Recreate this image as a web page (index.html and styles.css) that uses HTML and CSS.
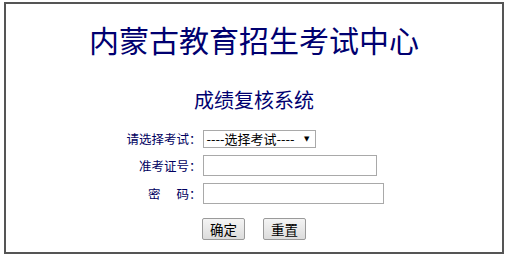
FILE: index.html
```html
<!DOCTYPE html>
<html lang="zh-CN">
<head>
<meta charset="utf-8">
<title>内蒙古教育招生考试中心 - 成绩复核系统</title>
<link rel="stylesheet" href="styles.css">
</head>
<body>
<div class="frame">
  <h1 class="title">内蒙古教育招生考试中心</h1>
  <h2 class="subtitle">成绩复核系统</h2>
  <form class="form">
    <label class="label">请选择考试：</label>
    <div class="field">
      <div class="select" role="listbox">
        <span class="select-text">----选择考试----</span>
        <span class="arrow">▼</span>
      </div>
    </div>
    <label class="label">准考证号：</label>
    <div class="field"><input class="input input-a" type="text"></div>
    <label class="label"><span class="spaced">密</span>码：</label>
    <div class="field"><input class="input input-b" type="password"></div>
  </form>
  <div class="buttons">
    <button class="btn" type="button">确定</button>
    <button class="btn" type="button">重置</button>
  </div>
</div>
</body>
</html>
```

FILE: styles.css
```css
html, body {
  margin: 0;
  padding: 0;
  background: #ffffff;
}
body {
  font-family: "Noto Sans CJK SC", "Noto Sans", sans-serif;
  color: #000080;
}
.frame {
  box-sizing: border-box;
  width: 500px;
  height: 252px;
  margin: 2px 0 0 4px;
  border: 2px solid #555555;
  padding-top: 20px;
}
.title {
  margin: 0;
  font-size: 30px;
  line-height: 30px;
  font-weight: normal;
  text-align: center;
  color: #000070;
}
.subtitle {
  margin: 36px 0 0;
  font-size: 20px;
  line-height: 20px;
  font-weight: normal;
  text-align: center;
  color: #000070;
}
.form {
  display: grid;
  grid-template-columns: 78px 181px;
  row-gap: 7px;
  justify-content: center;
  align-items: center;
  margin-top: 20px;
}
.label {
  font-size: 12.5px;
  line-height: 14px;
  text-align: right;
  padding-right: 1px;
  color: #000060;
}
.spaced {
  margin-right: 16px;
}
.field {
  display: flex;
  align-items: center;
}
.select {
  box-sizing: border-box;
  display: flex;
  align-items: center;
  justify-content: space-between;
  width: 113px;
  height: 18px;
  padding: 0 5px 0 3px;
  border: 1px solid #a9a9a9;
  background: #ffffff;
  color: #000000;
}
.select-text {
  font-size: 13px;
  line-height: 14px;
}
.arrow {
  font-family: "DejaVu Sans", sans-serif;
  font-size: 7px;
  line-height: 10px;
  color: #000000;
}
.input {
  box-sizing: border-box;
  height: 21px;
  margin: 0;
  padding: 0 2px;
  border: 1px solid #a9a9a9;
  background: #ffffff;
  font-size: 12px;
}
.input-a {
  width: 174px;
}
.input-b {
  width: 181px;
}
.buttons {
  display: flex;
  justify-content: center;
  gap: 18px;
  margin-top: 14px;
}
.btn {
  box-sizing: border-box;
  width: 43px;
  height: 22px;
  margin: 0;
  padding: 0;
  border: 1px solid #9a9a9a;
  border-radius: 2px;
  background: linear-gradient(#f4f4f4, #dcdcdc);
  font-family: "Noto Sans CJK SC", sans-serif;
  font-size: 13.5px;
  line-height: 20px;
  color: #000000;
}
```
